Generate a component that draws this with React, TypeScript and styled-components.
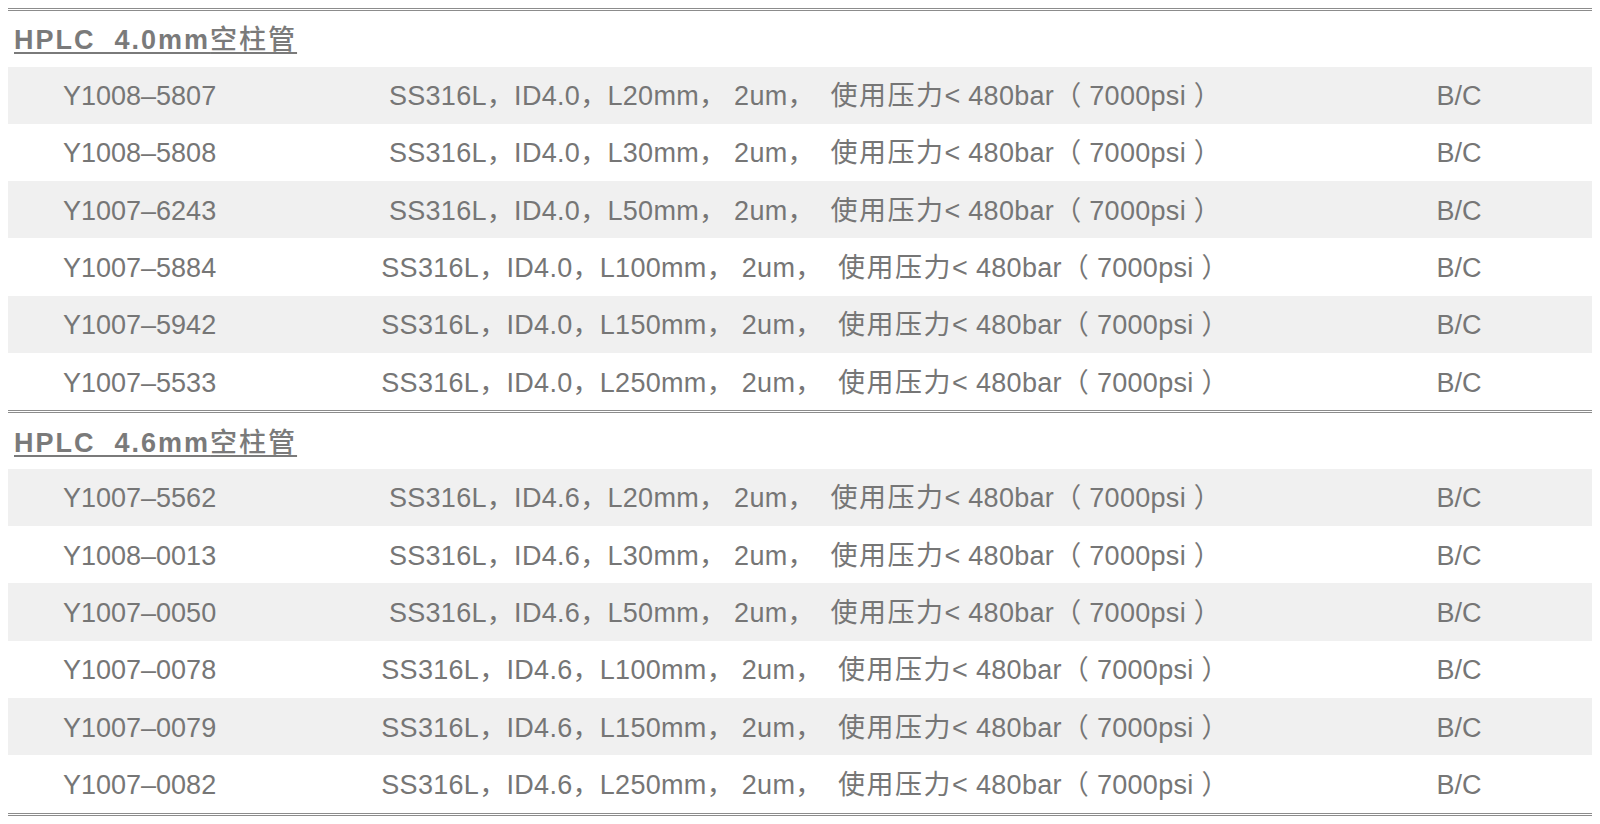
import styled, { createGlobalStyle } from "styled-components";

const GlobalStyle = createGlobalStyle`
  body {
    margin: 8px;
    background: #ffffff;
    font-family: "Liberation Sans", "Noto Sans CJK SC", sans-serif;
  }
`;

const Table = styled.div`
  display: flex;
  flex-direction: column;
  color: #767676;
`;

const Section = styled.section`
  border-top: 3px double #8c8c8c;
`;

const LastRule = styled.div`
  border-top: 3px double #8c8c8c;
`;

const Heading = styled.div`
  height: 55.5px;
  display: flex;
  align-items: center;
  padding: 3px 0 0 6px;
  box-sizing: border-box;
`;

const HeadingText = styled.span`
  font-size: 27px;
  line-height: 32px;
  font-weight: bold;
  letter-spacing: 2px;
  white-space: pre;
  color: #7a7a7a;
  text-decoration: underline;
  text-decoration-thickness: 2px;
  text-underline-offset: 3px;
`;

const HeadingCjk = styled.span`
  font-weight: 500;
`;

const Row = styled.div<{ $shade: boolean }>`
  display: grid;
  grid-template-columns: 276px 1042px 1fr;
  align-items: center;
  height: 57.3px;
  background: ${(p) => (p.$shade ? "#f0f0f0" : "#ffffff")};
  font-size: 27px;
  line-height: 32px;
  padding-top: 2px;
  box-sizing: border-box;
`;

const Code = styled.div`
  padding-left: 55px;
`;

const Spec = styled.div`
  text-align: center;
  white-space: pre;
  letter-spacing: 0.3px;
`;

const Cjk = styled.span`
  letter-spacing: 1.5px;
`;

const Cond = styled.div`
  text-align: center;
`;

type Item = { code: string; id: string; len: string };

const groups: { size: string; items: Item[] }[] = [
  {
    size: "4.0",
    items: [
      { code: "Y1008–5807", id: "4.0", len: "20" },
      { code: "Y1008–5808", id: "4.0", len: "30" },
      { code: "Y1007–6243", id: "4.0", len: "50" },
      { code: "Y1007–5884", id: "4.0", len: "100" },
      { code: "Y1007–5942", id: "4.0", len: "150" },
      { code: "Y1007–5533", id: "4.0", len: "250" },
    ],
  },
  {
    size: "4.6",
    items: [
      { code: "Y1007–5562", id: "4.6", len: "20" },
      { code: "Y1008–0013", id: "4.6", len: "30" },
      { code: "Y1007–0050", id: "4.6", len: "50" },
      { code: "Y1007–0078", id: "4.6", len: "100" },
      { code: "Y1007–0079", id: "4.6", len: "150" },
      { code: "Y1007–0082", id: "4.6", len: "250" },
    ],
  },
];

export default function App() {
  return (
    <>
      <GlobalStyle />
      <Table>
        {groups.map((g) => (
          <Section key={g.size}>
            <Heading>
              <HeadingText>
                {`HPLC  ${g.size}mm`}
                <HeadingCjk>空柱管</HeadingCjk>
              </HeadingText>
            </Heading>
            {g.items.map((it, i) => (
              <Row key={it.code} $shade={i % 2 === 0}>
                <Code>{it.code}</Code>
                <Spec>
                  {`SS316L，ID${it.id}，L${it.len}mm， 2um，  `}
                  <Cjk>使用压力</Cjk>
                  {`< 480bar（ 7000psi ）`}
                </Spec>
                <Cond>B/C</Cond>
              </Row>
            ))}
          </Section>
        ))}
        <LastRule />
      </Table>
    </>
  );
}
